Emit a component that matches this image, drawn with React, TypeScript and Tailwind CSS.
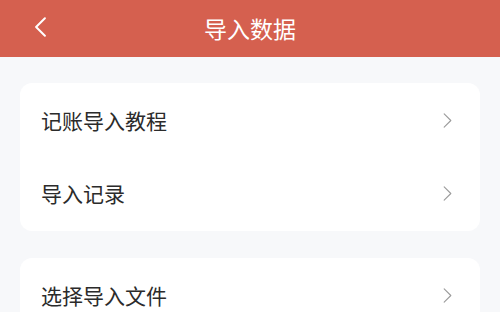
const font = { fontFamily: '"Noto Sans CJK SC", "Noto Sans", sans-serif' };

function Chevron({ className, dir, stroke }: { className: string; dir: "left" | "right"; stroke: number }) {
  return (
    <svg viewBox="0 0 10 18" fill="none" className={className}>
      <path
        d={dir === "left" ? "M9 1 1 9l8 8" : "M1 1l8 8-8 8"}
        stroke="currentColor"
        strokeWidth={stroke}
        strokeLinecap="round"
        strokeLinejoin="round"
      />
    </svg>
  );
}

function Row({ label }: { label: string }) {
  return (
    <div className="flex h-[73px] items-center justify-between pl-[21px] pr-[28px]">
      <span className="text-[21px] text-[#2b2b2b]">{label}</span>
      <Chevron dir="right" stroke={1.3} className="h-[15px] w-[9px] text-[#9a9a9a]" />
    </div>
  );
}

export default function App() {
  return (
    <div className="h-[312px] w-[500px] overflow-hidden bg-[#f7f8fa]" style={font}>
      {/* Header */}
      <div className="relative flex h-[57px] items-center justify-center bg-[#d5604f]">
        <Chevron
          dir="left"
          stroke={1.8}
          className="absolute left-[35px] top-[17px] h-[20px] w-[11px] text-white"
        />
        <span className="text-[23px] text-white">导入数据</span>
      </div>

      <div className="flex flex-col gap-[27px] px-[20px] pt-[26px]">
        <div className="rounded-[12px] bg-white py-[1px]">
          <Row label="记账导入教程" />
          <Row label="导入记录" />
        </div>
        <div className="rounded-[12px] bg-white py-[1px]">
          <Row label="选择导入文件" />
        </div>
      </div>
    </div>
  );
}
